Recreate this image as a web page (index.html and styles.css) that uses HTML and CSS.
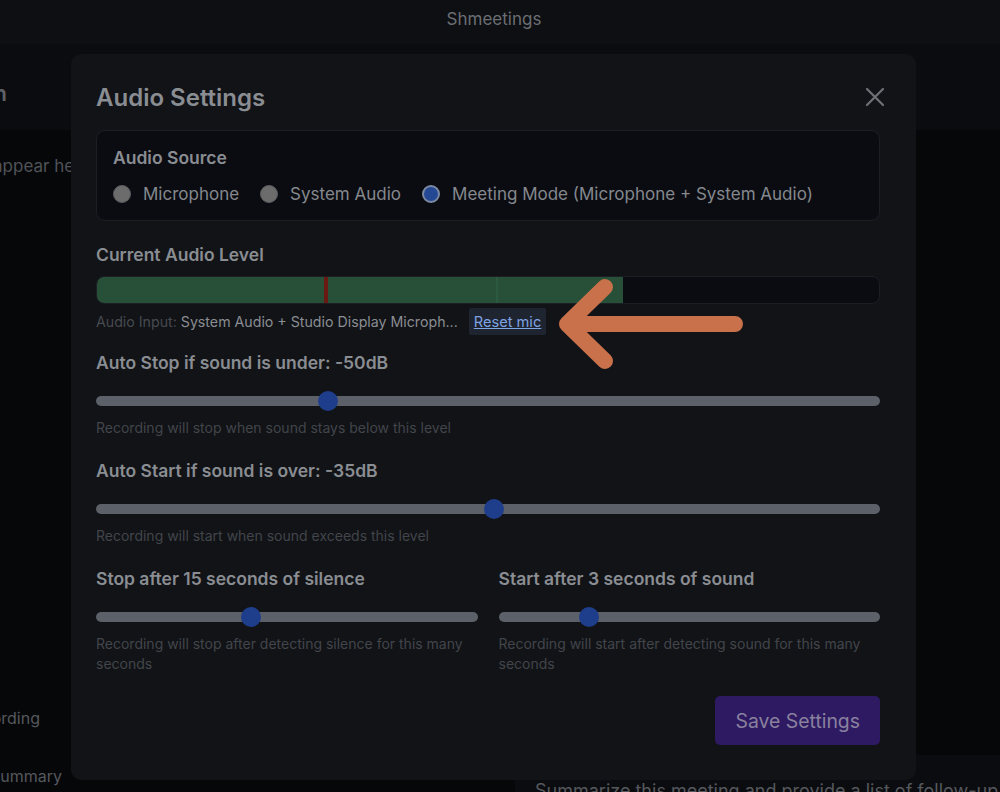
FILE: index.html
```html
<!DOCTYPE html>
<html lang="en">
<head>
<meta charset="UTF-8">
<meta name="viewport" content="width=device-width, initial-scale=1.0">
<title>Shmeetings</title>
<link rel="stylesheet" href="styles.css">
</head>
<body>
<header class="topbar">Shmeetings</header>
<div class="subbar">
  <div class="clip-end sub-title"><span>Live Transcription</span></div>
</div>
<div class="app">
  <aside class="side">
    <p class="side-empty">Transcripts will appear here</p>
    <div class="clip-end side-btn rec"><span>Start Recording</span></div>
    <div class="clip-end side-btn sum"><span>Generate Summary</span></div>
  </aside>
  <main class="content">
    <div class="prompt">Summarize this meeting and provide a list of follow-up items</div>
  </main>
</div>

<!-- settings dialog -->
<div class="modal">
  <div class="modal-head">
    <h2>Audio Settings</h2>
    <button class="close" aria-label="Close">
      <svg width="20" height="20" viewBox="0 0 20 20"><path d="M2 2 L18 18 M18 2 L2 18" stroke="currentColor" stroke-width="2.2" stroke-linecap="round"/></svg>
    </button>
  </div>

  <div class="source">
    <div class="label">Audio Source</div>
    <div class="radios">
      <label class="radio"><input type="radio" name="src"> Microphone</label>
      <label class="radio"><input type="radio" name="src"> System Audio</label>
      <label class="radio"><input type="radio" name="src" checked> Meeting Mode (Microphone + System Audio)</label>
    </div>
  </div>

  <div class="group level">
    <div class="label">Current Audio Level</div>
    <div class="meter">
      <div class="meter-fill" style="width:67.2%"></div>
      <span class="mark stop" style="left:29.3%"></span>
      <span class="mark start" style="left:51.3%"></span>
    </div>
    <div class="input-row">
      <span class="input-name"><span class="muted">Audio Input:</span> System Audio + Studio Display Microph...</span>
      <button class="reset">Reset mic</button>
    </div>
  </div>

  <div class="group first">
    <div class="label">Auto Stop if sound is under: -50dB</div>
    <div class="slider"><span class="thumb" style="left:29.55%"></span></div>
    <p class="hint">Recording will stop when sound stays below this level</p>
  </div>

  <div class="group">
    <div class="label">Auto Start if sound is over: -35dB</div>
    <div class="slider"><span class="thumb" style="left:50.77%"></span></div>
    <p class="hint">Recording will start when sound exceeds this level</p>
  </div>

  <div class="cols">
    <div class="group">
      <div class="label">Stop after 15 seconds of silence</div>
      <div class="slider"><span class="thumb" style="left:40.6%"></span></div>
      <p class="hint">Recording will stop after detecting silence for this many seconds</p>
    </div>
    <div class="group">
      <div class="label">Start after 3 seconds of sound</div>
      <div class="slider"><span class="thumb" style="left:23.6%"></span></div>
      <p class="hint">Recording will start after detecting sound for this many seconds</p>
    </div>
  </div>

  <div class="actions">
    <button class="save">Save Settings</button>
  </div>
</div>

<svg class="arrow" width="210" height="110" viewBox="0 0 210 110">
  <path d="M188 54 L21 54 M58 17 L20 54 L58 91" fill="none" stroke="#c8714a" stroke-width="16" stroke-linecap="round" stroke-linejoin="round"/>
</svg>
</body>
</html>
```

FILE: styles.css
```css
body {
  margin: 0;
  height: 792px;
  overflow: hidden;
  position: relative;
  background: #060709;
  font-family: Inter, 'Noto Sans', sans-serif;
  color: #8a8d92;
}
.topbar {
  height: 44px;
  background: #0e0f12;
  display: flex;
  align-items: center;
  justify-content: center;
  padding-right: 12px;
  padding-bottom: 6px;
  box-sizing: border-box;
  font-size: 17px;
  color: #6b6e73;
}
.subbar {
  height: 86px;
  background: #0b0c0f;
  display: flex;
  align-items: center;
  padding-top: 12px;
  box-sizing: border-box;
}
.clip-end {
  display: flex;
  justify-content: flex-end;
  overflow: hidden;
  white-space: nowrap;
}
.sub-title {
  width: 7px;
  font-size: 22px;
  font-weight: 600;
  color: #5d6065;
}
.app {
  display: flex;
  height: 662px;
}
.side {
  width: 71px;
  overflow: hidden;
  display: flex;
  flex-direction: column;
}
.side-empty {
  margin: 26px 0 0 -133px;
  white-space: nowrap;
  font-size: 17px;
  color: #505358;
}
.side-btn {
  font-size: 16px;
  color: #55585d;
}
.side-btn.rec {
  width: 40px;
  margin-top: 532px;
}
.side-btn.sum {
  width: 62px;
  margin-top: 38px;
}
.content {
  flex: 1;
  display: flex;
  justify-content: flex-end;
  align-items: flex-end;
}
.prompt {
  width: 465px;
  height: 26px;
  padding: 25px 0 0 20px;
  margin-bottom: -14px;
  background: #0b0c0f;
  white-space: nowrap;
  overflow: hidden;
  font-size: 18px;
  color: #55585d;
}

.modal {
  position: absolute;
  left: 71px;
  top: 54px;
  width: 845px;
  height: 726px;
  box-sizing: border-box;
  padding: 27px 36px 0 25px;
  background: #111317;
  border-radius: 10px;
}
.modal-head {
  display: flex;
  justify-content: space-between;
  align-items: center;
  height: 32px;
}
.modal-head h2 {
  margin: 0;
  font-size: 24px;
  font-weight: 600;
  color: #8a8d92;
}
.close {
  background: none;
  border: 0;
  padding: 0;
  margin-right: -5px;
  color: #6e7176;
  display: flex;
}
.source {
  margin-top: 17px;
  height: 91px;
  box-sizing: border-box;
  padding: 16px 16px 0;
  background: #0a0c12;
  border: 1px solid #1b1e25;
  border-radius: 9px;
}
.label {
  font-size: 17.5px;
  font-weight: 600;
  line-height: 22px;
  color: #8a8d92;
}
.radios {
  display: flex;
  gap: 21px;
  margin-top: 13px;
}
.radio {
  display: flex;
  align-items: center;
  gap: 12px;
  font-size: 17px;
  line-height: 24px;
  color: #85888d;
}
.radio input {
  appearance: none;
  margin: 0;
  width: 18px;
  height: 18px;
  border-radius: 50%;
  background: #6c6c6d;
  border: 1px solid #5b5b5d;
}
.radio input:checked {
  background: #244894;
  border: 2px solid #7c89a2;
}
.group {
  margin-top: 22px;
}
.level {
  margin-top: 23px;
}
.group.first {
  margin-top: 17px;
}
.meter {
  position: relative;
  margin-top: 10px;
  height: 28px;
  box-sizing: border-box;
  background: #0a0c12;
  border: 1px solid #1b1e25;
  border-radius: 8px;
  overflow: hidden;
}
.meter-fill {
  height: 100%;
  background: #285039;
}
.mark {
  position: absolute;
  top: 0;
  bottom: 0;
  width: 4px;
  margin-left: -2px;
}
.mark.stop {
  background: #6a1812;
}
.mark.start {
  width: 2px;
  background: #2c5a41;
}
.input-row {
  display: flex;
  align-items: center;
  gap: 11px;
  margin-top: 4px;
  height: 27px;
  font-size: 14.2px;
  color: #8a8d92;
}
.muted {
  color: #474a4f;
}
.reset {
  height: 27px;
  padding: 0 5px;
  background: #1e2430;
  border: 0;
  border-radius: 2px;
  font-family: inherit;
  font-size: 14.6px;
  color: #7ea3e3;
  text-decoration: underline;
}
.group .label + .slider {
  margin-top: 17px;
}
.slider {
  position: relative;
  height: 20px;
  display: flex;
  align-items: center;
}
.slider::before {
  content: "";
  flex: 1;
  height: 10px;
  border-radius: 5px;
  background: #5c6068;
}
.thumb {
  position: absolute;
  top: 0;
  width: 20px;
  height: 20px;
  margin-left: -10px;
  border-radius: 50%;
  background: #1e3d8a;
}
.hint {
  margin: 7px 0 0;
  font-size: 14px;
  line-height: 20px;
  color: #42454a;
}
.cols {
  display: grid;
  grid-template-columns: 1fr 1fr;
  gap: 21px;
}
.actions {
  display: flex;
  justify-content: flex-end;
  margin-top: 22px;
}
.save {
  height: 49px;
  padding: 0 20px;
  background: #2e1a62;
  border: 0;
  border-radius: 5px;
  font-family: inherit;
  font-size: 19.4px;
  color: #8a819f;
}
.arrow {
  position: absolute;
  left: 547px;
  top: 270px;
}
```
